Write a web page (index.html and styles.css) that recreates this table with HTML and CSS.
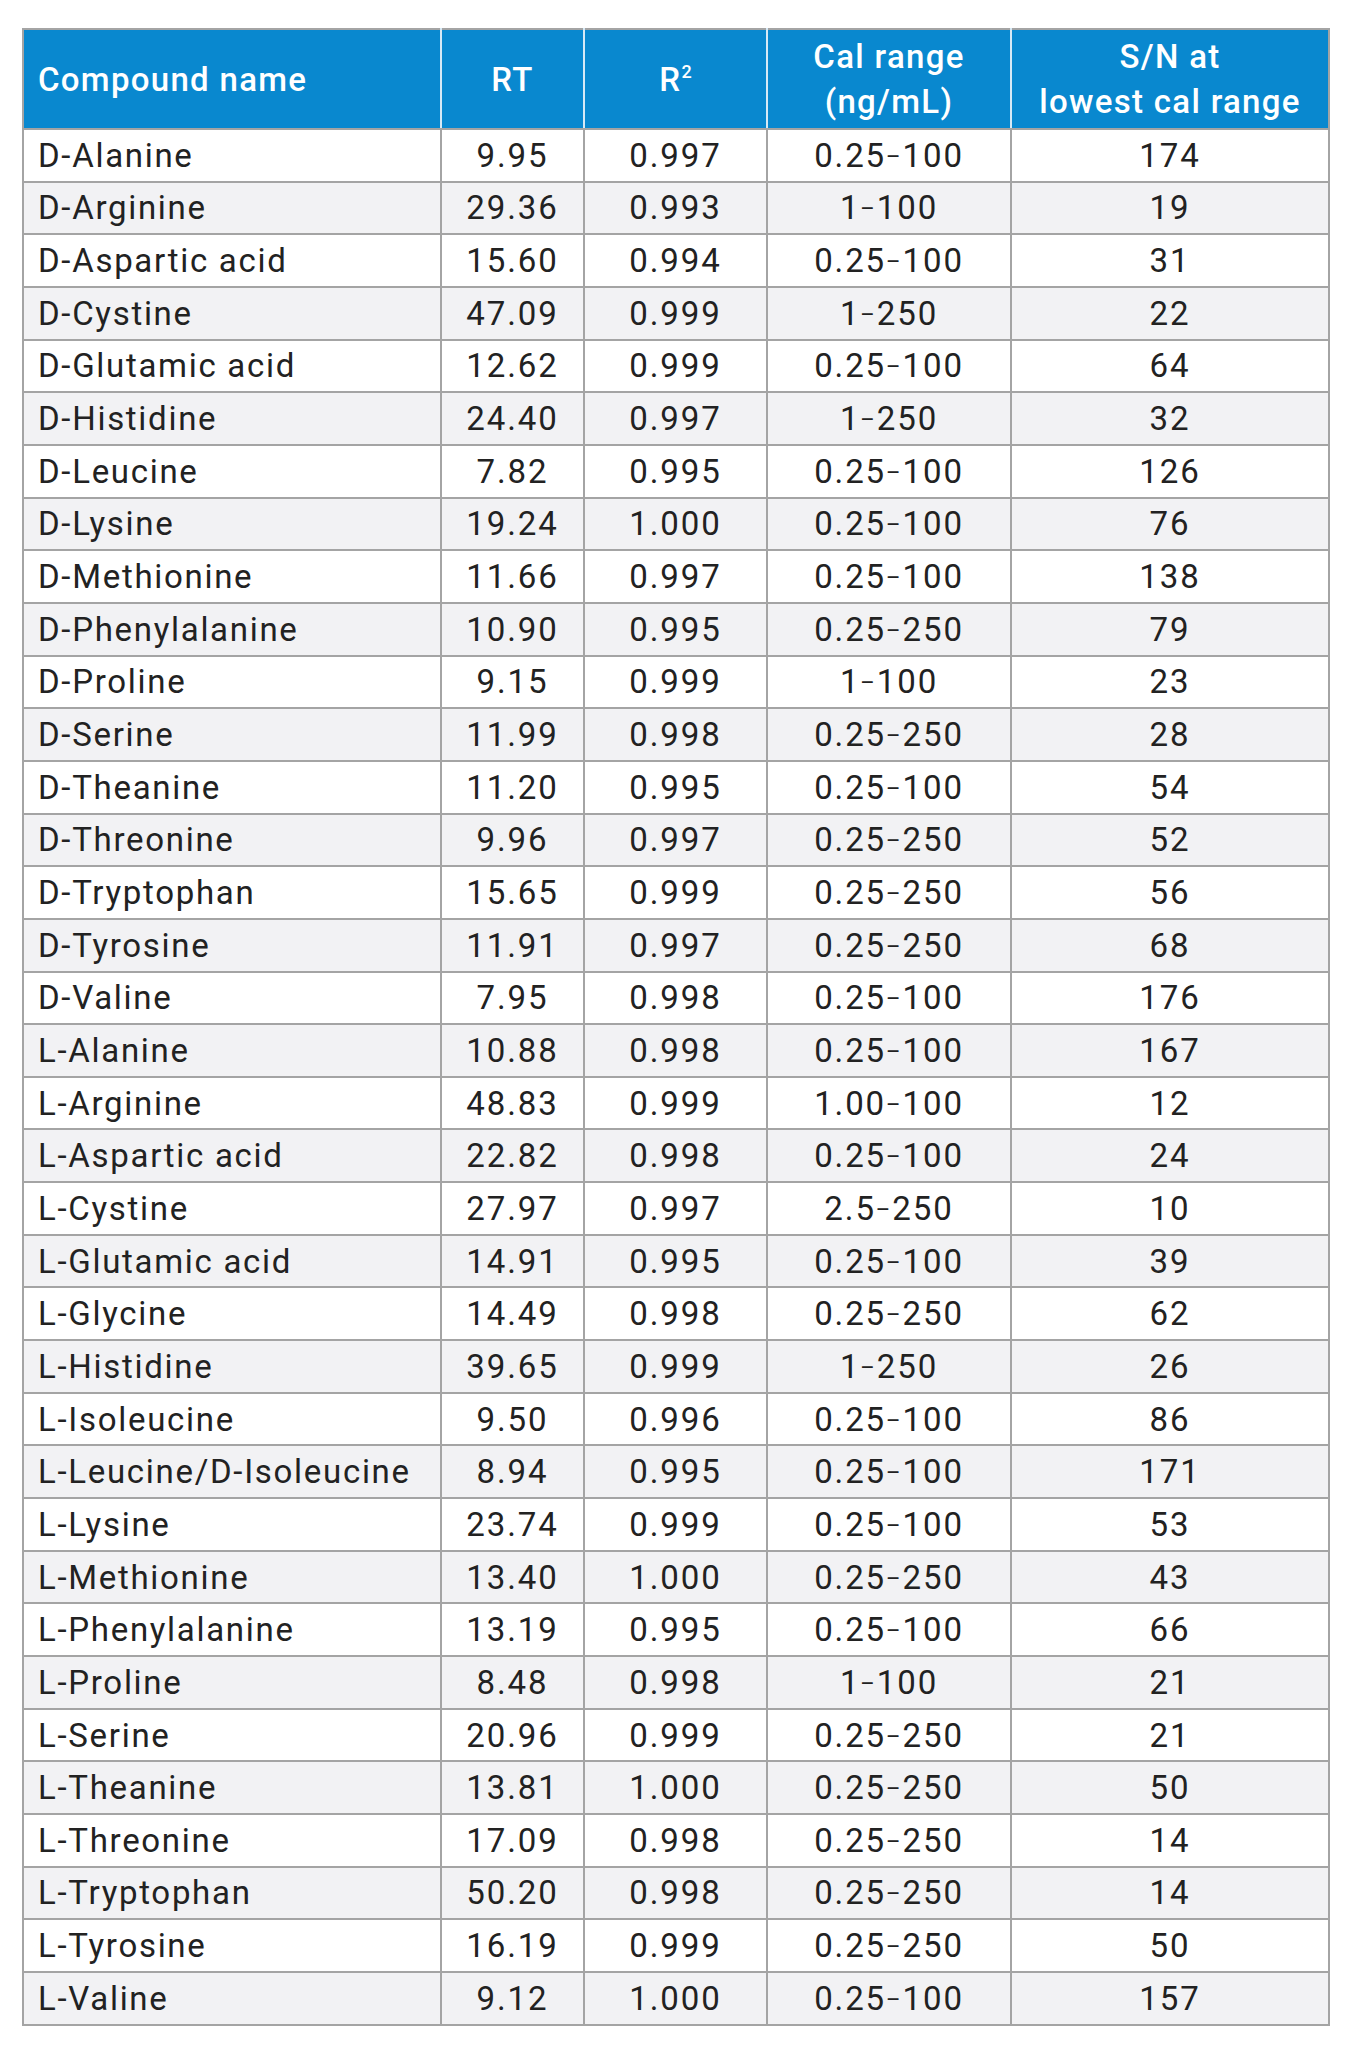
FILE: index.html
```html
<!DOCTYPE html>
<html>
<head>
<meta charset="utf-8">
<link rel="stylesheet" href="styles.css">
</head>
<body>
<div class="page">
<table class="data">
<colgroup>
<col class="c-name"><col class="c-rt"><col class="c-r2"><col class="c-cal"><col class="c-sn">
</colgroup>
<thead>
<tr>
<th class="name">Compound name</th>
<th>RT</th>
<th>R<sup>2</sup></th>
<th>Cal range<br>(ng/mL)</th>
<th>S/N at<br>lowest cal range</th>
</tr>
</thead>
<tbody>
<tr><td class="name">D-Alanine</td><td>9.95</td><td>0.997</td><td>0.25<span class="dash">–</span>100</td><td>174</td></tr>
<tr><td class="name">D-Arginine</td><td>29.36</td><td>0.993</td><td>1<span class="dash">–</span>100</td><td>19</td></tr>
<tr><td class="name">D-Aspartic acid</td><td>15.60</td><td>0.994</td><td>0.25<span class="dash">–</span>100</td><td>31</td></tr>
<tr><td class="name">D-Cystine</td><td>47.09</td><td>0.999</td><td>1<span class="dash">–</span>250</td><td>22</td></tr>
<tr><td class="name">D-Glutamic acid</td><td>12.62</td><td>0.999</td><td>0.25<span class="dash">–</span>100</td><td>64</td></tr>
<tr><td class="name">D-Histidine</td><td>24.40</td><td>0.997</td><td>1<span class="dash">–</span>250</td><td>32</td></tr>
<tr><td class="name">D-Leucine</td><td>7.82</td><td>0.995</td><td>0.25<span class="dash">–</span>100</td><td>126</td></tr>
<tr><td class="name">D-Lysine</td><td>19.24</td><td>1.000</td><td>0.25<span class="dash">–</span>100</td><td>76</td></tr>
<tr><td class="name">D-Methionine</td><td>11.66</td><td>0.997</td><td>0.25<span class="dash">–</span>100</td><td>138</td></tr>
<tr><td class="name">D-Phenylalanine</td><td>10.90</td><td>0.995</td><td>0.25<span class="dash">–</span>250</td><td>79</td></tr>
<tr><td class="name">D-Proline</td><td>9.15</td><td>0.999</td><td>1<span class="dash">–</span>100</td><td>23</td></tr>
<tr><td class="name">D-Serine</td><td>11.99</td><td>0.998</td><td>0.25<span class="dash">–</span>250</td><td>28</td></tr>
<tr><td class="name">D-Theanine</td><td>11.20</td><td>0.995</td><td>0.25<span class="dash">–</span>100</td><td>54</td></tr>
<tr><td class="name">D-Threonine</td><td>9.96</td><td>0.997</td><td>0.25<span class="dash">–</span>250</td><td>52</td></tr>
<tr><td class="name">D-Tryptophan</td><td>15.65</td><td>0.999</td><td>0.25<span class="dash">–</span>250</td><td>56</td></tr>
<tr><td class="name">D-Tyrosine</td><td>11.91</td><td>0.997</td><td>0.25<span class="dash">–</span>250</td><td>68</td></tr>
<tr><td class="name">D-Valine</td><td>7.95</td><td>0.998</td><td>0.25<span class="dash">–</span>100</td><td>176</td></tr>
<tr><td class="name">L-Alanine</td><td>10.88</td><td>0.998</td><td>0.25<span class="dash">–</span>100</td><td>167</td></tr>
<tr><td class="name">L-Arginine</td><td>48.83</td><td>0.999</td><td>1.00<span class="dash">–</span>100</td><td>12</td></tr>
<tr><td class="name">L-Aspartic acid</td><td>22.82</td><td>0.998</td><td>0.25<span class="dash">–</span>100</td><td>24</td></tr>
<tr><td class="name">L-Cystine</td><td>27.97</td><td>0.997</td><td>2.5<span class="dash">–</span>250</td><td>10</td></tr>
<tr><td class="name">L-Glutamic acid</td><td>14.91</td><td>0.995</td><td>0.25<span class="dash">–</span>100</td><td>39</td></tr>
<tr><td class="name">L-Glycine</td><td>14.49</td><td>0.998</td><td>0.25<span class="dash">–</span>250</td><td>62</td></tr>
<tr><td class="name">L-Histidine</td><td>39.65</td><td>0.999</td><td>1<span class="dash">–</span>250</td><td>26</td></tr>
<tr><td class="name">L-Isoleucine</td><td>9.50</td><td>0.996</td><td>0.25<span class="dash">–</span>100</td><td>86</td></tr>
<tr><td class="name">L-Leucine/D-Isoleucine</td><td>8.94</td><td>0.995</td><td>0.25<span class="dash">–</span>100</td><td>171</td></tr>
<tr><td class="name">L-Lysine</td><td>23.74</td><td>0.999</td><td>0.25<span class="dash">–</span>100</td><td>53</td></tr>
<tr><td class="name">L-Methionine</td><td>13.40</td><td>1.000</td><td>0.25<span class="dash">–</span>250</td><td>43</td></tr>
<tr><td class="name">L-Phenylalanine</td><td>13.19</td><td>0.995</td><td>0.25<span class="dash">–</span>100</td><td>66</td></tr>
<tr><td class="name">L-Proline</td><td>8.48</td><td>0.998</td><td>1<span class="dash">–</span>100</td><td>21</td></tr>
<tr><td class="name">L-Serine</td><td>20.96</td><td>0.999</td><td>0.25<span class="dash">–</span>250</td><td>21</td></tr>
<tr><td class="name">L-Theanine</td><td>13.81</td><td>1.000</td><td>0.25<span class="dash">–</span>250</td><td>50</td></tr>
<tr><td class="name">L-Threonine</td><td>17.09</td><td>0.998</td><td>0.25<span class="dash">–</span>250</td><td>14</td></tr>
<tr><td class="name">L-Tryptophan</td><td>50.20</td><td>0.998</td><td>0.25<span class="dash">–</span>250</td><td>14</td></tr>
<tr><td class="name">L-Tyrosine</td><td>16.19</td><td>0.999</td><td>0.25<span class="dash">–</span>250</td><td>50</td></tr>
<tr><td class="name">L-Valine</td><td>9.12</td><td>1.000</td><td>0.25<span class="dash">–</span>100</td><td>157</td></tr>
</tbody>
</table>
</div>
</body>
</html>
```

FILE: styles.css
```css
html, body {
  margin: 0;
  padding: 0;
  background: #ffffff;
}
.page {
  padding: 28px 0 0 22px;
}
.data {
  border-collapse: collapse;
  table-layout: fixed;
  width: 1306px;
  font-family: Roboto, "Liberation Sans", sans-serif;
  color: #222222;
}
.c-name { width: 418px; }
.c-rt { width: 143px; }
.c-r2 { width: 183px; }
.c-cal { width: 244px; }
.c-sn { width: 318px; }
.data th {
  background: #0988cf;
  color: #ffffff;
  font-weight: 500;
  font-size: 33px;
  letter-spacing: 1.3px;
  line-height: 45px;
  height: 98px;
  padding: 0 2px;
  text-align: center;
  border: 2px solid #a4a4a4;
  border-left-color: #d6e9f6;
  border-right-color: #d6e9f6;
}
.data th:first-child { border-left-color: #a4a4a4; }
.data th:last-child { border-right-color: #a4a4a4; }
.data th.name {
  text-align: left;
  padding-left: 14px;
}
.data th sup {
  font-size: 18px;
  line-height: 0;
  vertical-align: 13px;
  letter-spacing: 0;
}
.data td {
  font-size: 33px;
  letter-spacing: 1.9px;
  height: 50.67px;
  padding: 0 4px;
  text-align: center;
  border: 2px solid #a4a4a4;
  white-space: nowrap;
}
.data td.name {
  text-align: left;
  padding-left: 14px;
  letter-spacing: 1.7px;
}
.data td .dash {
  font-size: 22px;
  letter-spacing: 0;
  margin: 0 2px 0 0;
  vertical-align: 3px;
}
.data tbody tr:nth-child(even) td {
  background: #f2f2f4;
}
```
